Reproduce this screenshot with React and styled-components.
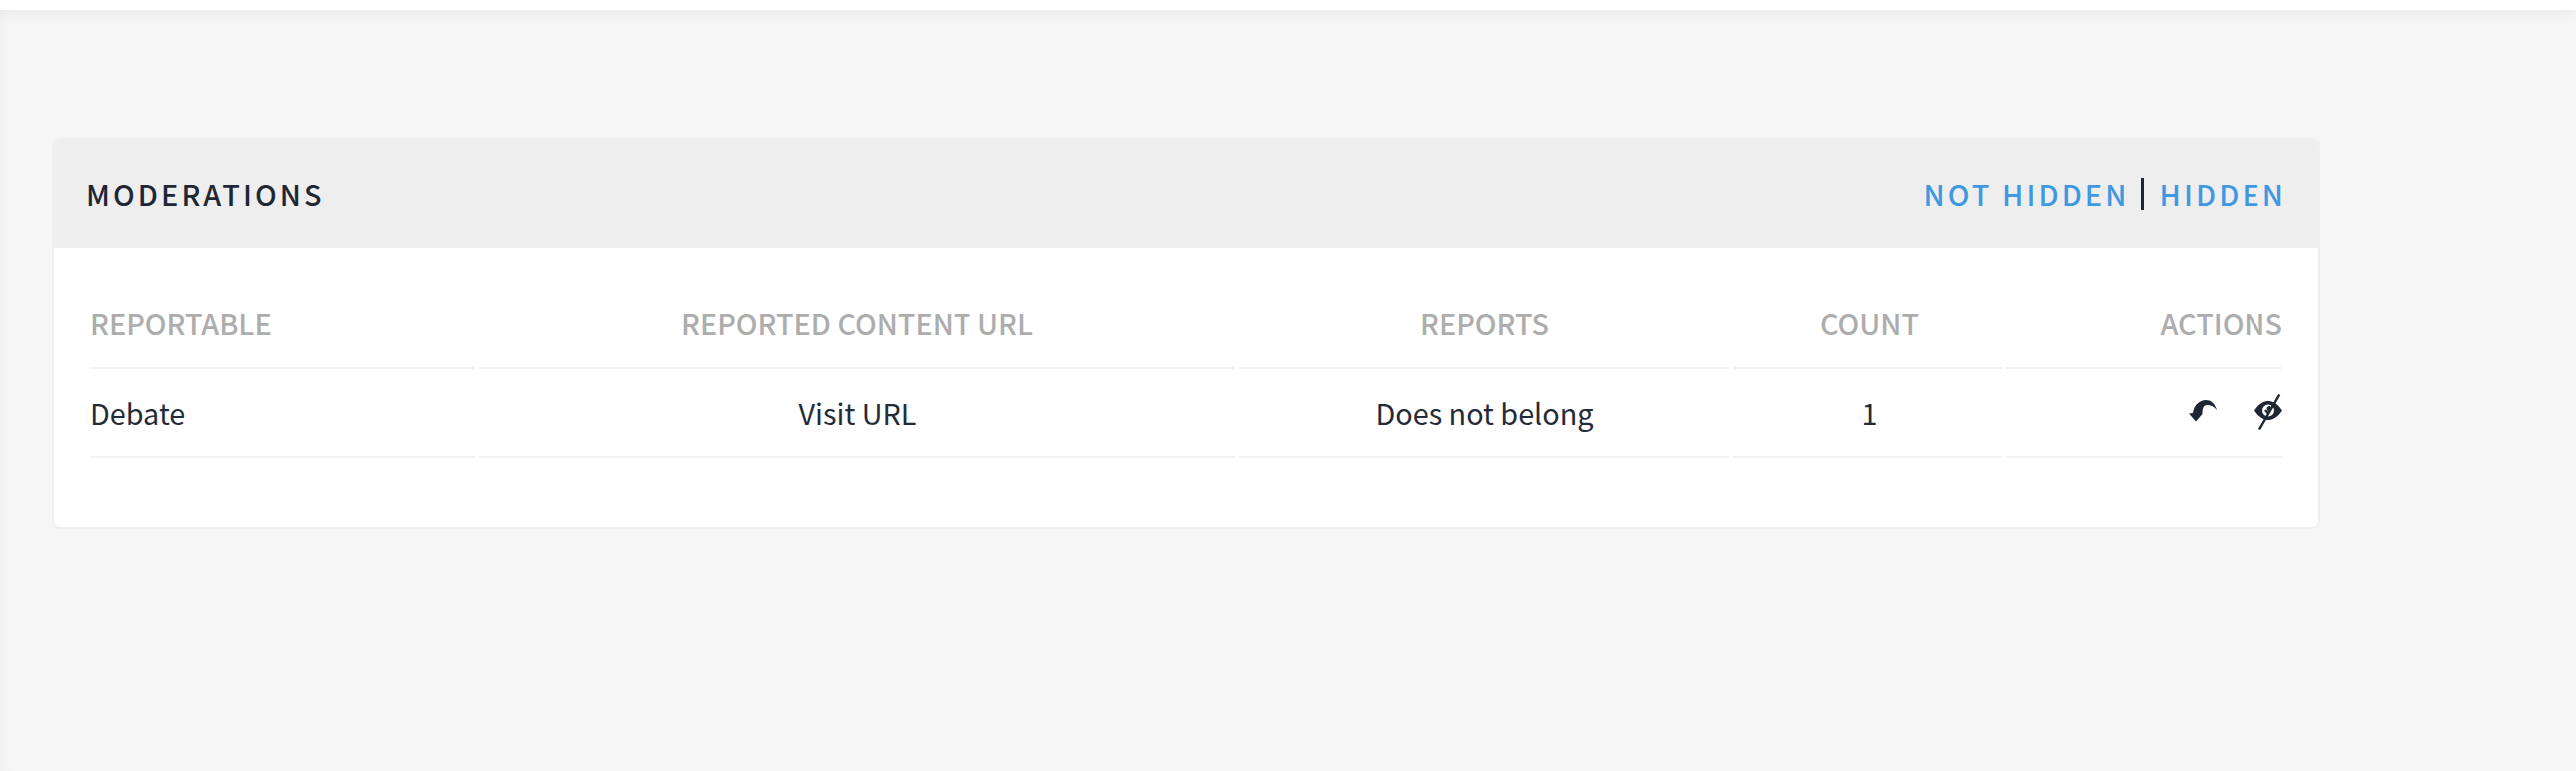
import React from 'react';
import styled, { createGlobalStyle } from 'styled-components';

const GlobalStyle = createGlobalStyle`
  html, body { margin: 0; padding: 0; background: #f6f6f6; }
  body { font-family: "Noto Sans CJK SC", "Source Sans Pro", "Noto Sans", sans-serif; color: #1f2735; }
`;

const Page = styled.div`
  width: 2580px;
  height: 772px;
  overflow: hidden;
  background: #f6f6f6;
  box-shadow: inset 12px 0 10px -8px #efefef;
`;

const TopBar = styled.div`
  height: 10px;
  background: #fff;
  box-shadow: 0 2px 14px rgba(0, 0, 0, 0.07);
`;

const Content = styled.div`
  padding: 128px 0 0 52px;
`;

const Card = styled.section`
  width: 2272px;
  height: 392px;
  box-sizing: border-box;
  background: #fff;
  border: 2px solid #efefef;
  border-top: 0;
  border-radius: 8px;
  overflow: hidden;
`;

const CardHeader = styled.header`
  height: 110px;
  margin: 0 -2px;
  padding: 0 34px;
  background: #eeeeee;
  display: flex;
  align-items: center;
  justify-content: space-between;
`;

const Title = styled.h2`
  margin: 0;
  font-size: 28.800px;
  font-weight: 500;
  letter-spacing: 3.100px;
  color: #1f2735;
`;

const Filters = styled.div`
  display: flex;
  align-items: center;
  font-size: 28.800px;
  font-weight: 500;
  letter-spacing: 3.100px;
`;

const FilterLink = styled.a`
  color: #3f99e2;
`;

const Pipe = styled.span`
  width: 3px;
  height: 32px;
  margin: 2px 15px 0 12px;
  background: #1f2735;
`;

const Table = styled.table`
  margin: 36px 0 0 32px;
  width: 2204px;
  table-layout: fixed;
  border-collapse: separate;
  border-spacing: 4px 0;
  font-size: 28.800px;
`;

const Th = styled.th`
  height: 85px;
  box-sizing: border-box;
  padding: 0 0 6px ${(p) => p.$nudge || 0}px;
  font-weight: 500;
  color: #adadad;
  text-align: ${(p) => p.$align || 'center'};
  border-bottom: 2px solid #f2f2f2;
`;

const Td = styled.td`
  height: 90px;
  box-sizing: border-box;
  padding: 0 0 0 ${(p) => p.$nudge || 0}px;
  font-weight: 400;
  color: #232b39;
  text-align: ${(p) => p.$align || 'center'};
  border-bottom: 2px solid #f2f2f2;
`;

const Actions = styled.div`
  display: flex;
  justify-content: flex-end;
  align-items: center;
  gap: 38px;
`;

const IconButton = styled.span`
  display: flex;
  color: #1f2735;
  margin-top: ${(p) => p.$lift || 0}px;
`;

const UndoIcon = () => (
  <svg width="28" height="24" viewBox="0 0 28 24">
    <path fill="currentColor" d="M0 14.500 L4 14 C5 6 11 1 17 1 C22 1 26 4 28 11 C25 7 21 6 18 6 C15 6 13.500 9 13.500 15 L7 22.500 Z" />
  </svg>
);

const EyeOffIcon = () => (
  <svg width="28" height="36" viewBox="0 0 28 36">
    <path fill="currentColor" fillRule="evenodd" d="M0 16.500 C5 9 10 7 14 7 C18 7 23 9 28 16.500 C23 24 18 26 14 26 C10 26 5 24 0 16.500 Z M14 10.500 A6 6 0 1 0 14 22.500 A6 6 0 1 0 14 10.500 Z" />
    <path fill="none" stroke="currentColor" strokeWidth="2.400" d="M11 16 L13.500 19 M25.300 0.500 L5 35.500" />
    <path fill="currentColor" d="M12.500 14.500 A2.500 2.500 0 0 1 17 13 L14 18 Z" />
  </svg>
);

export default function App() {
  return (
    <>
      <GlobalStyle />
      <Page>
        <TopBar />
        <Content>
          <Card>
            <CardHeader>
              <Title>MODERATIONS</Title>
              <Filters>
                <FilterLink>NOT HIDDEN</FilterLink>
                <Pipe />
                <FilterLink>HIDDEN</FilterLink>
              </Filters>
            </CardHeader>
            <Table>
              <colgroup>
                <col style={{ width: 386 }} />
                <col style={{ width: 757 }} />
                <col style={{ width: 491 }} />
                <col style={{ width: 269 }} />
                <col style={{ width: 277 }} />
              </colgroup>
              <thead>
                <tr>
                  <Th $align="left">REPORTABLE</Th>
                  <Th>REPORTED CONTENT URL</Th>
                  <Th>REPORTS</Th>
                  <Th $nudge={4}>COUNT</Th>
                  <Th $align="right">ACTIONS</Th>
                </tr>
              </thead>
              <tbody>
                <tr>
                  <Td $align="left">Debate</Td>
                  <Td>Visit URL</Td>
                  <Td>Does not belong</Td>
                  <Td $nudge={4}>1</Td>
                  <Td>
                    <Actions>
                      <IconButton $lift={-3}><UndoIcon /></IconButton>
                      <IconButton><EyeOffIcon /></IconButton>
                    </Actions>
                  </Td>
                </tr>
              </tbody>
            </Table>
          </Card>
        </Content>
      </Page>
    </>
  );
}
